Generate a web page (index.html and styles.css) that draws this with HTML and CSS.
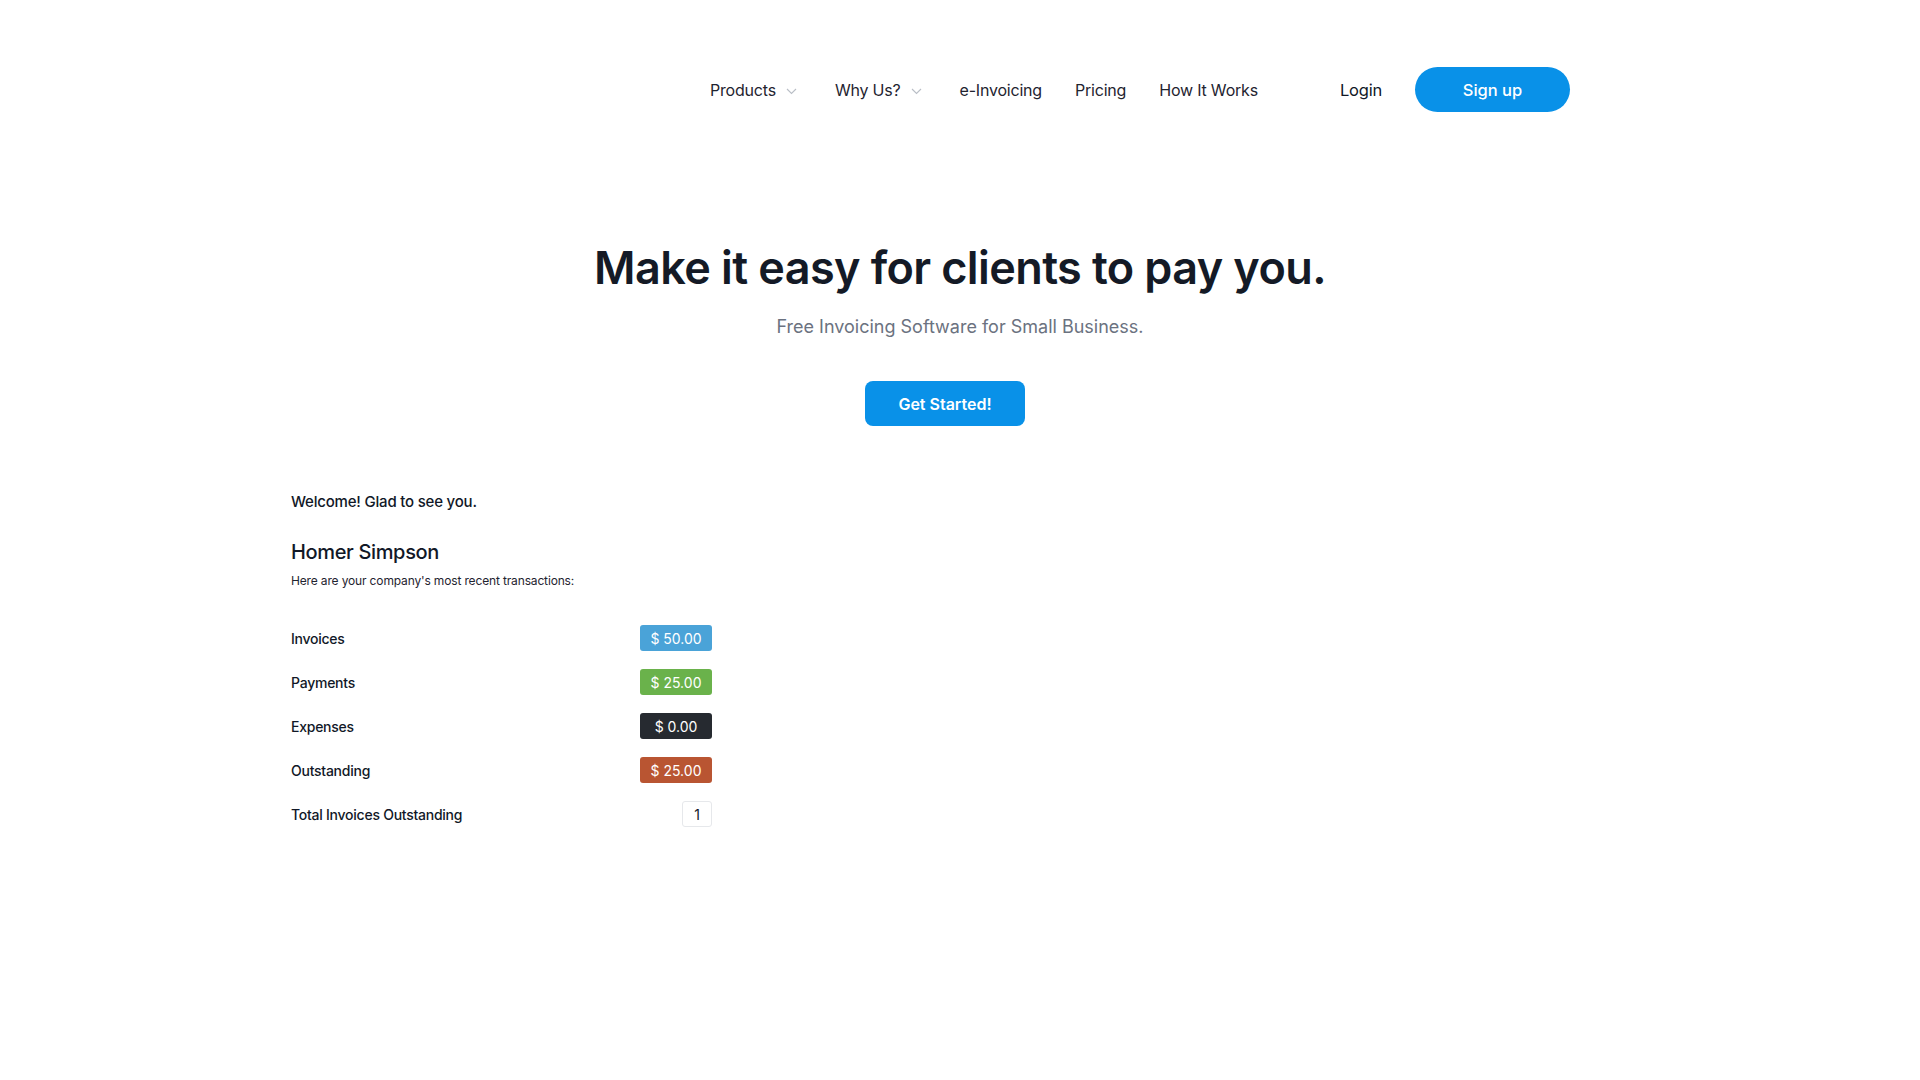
FILE: index.html
```html
<!DOCTYPE html>
<html lang="en">
<head>
  <meta charset="UTF-8">
  <title>Free Invoicing Software for Small Business</title>
  <meta name="viewport" content="width=device-width, initial-scale=1">
  <link rel="stylesheet" href="styles.css">
</head>
<body>
  <header class="site-header">
    <div class="brand"></div>
    <ul class="main-nav">
      <li class="has-menu">Products
        <svg class="caret" width="11" height="7" viewBox="0 0 11 7"><path d="M1 1l4.5 4.5L10 1" fill="none" stroke="#b9bec6" stroke-width="1.1"/></svg>
      </li>
      <li class="has-menu">Why Us?
        <svg class="caret" width="11" height="7" viewBox="0 0 11 7"><path d="M1 1l4.5 4.5L10 1" fill="none" stroke="#b9bec6" stroke-width="1.1"/></svg>
      </li>
      <li>e-Invoicing</li>
      <li>Pricing</li>
      <li>How It Works</li>
    </ul>
    <div class="nav-actions">
      <a class="login-link" href="#">Login</a>
      <a class="signup-btn" href="#">Sign up</a>
    </div>
  </header>

  <section class="hero">
    <h1>Make it easy for clients to pay you.</h1>
    <p class="lead">Free Invoicing Software for Small Business.</p>
    <a class="start-btn" href="#">Get Started!</a>
  </section>

  <section class="dashboard">
    <p class="welcome">Welcome! Glad to see you.</p>
    <h2>Homer Simpson</h2>
    <p class="note">Here are your company's most recent transactions:</p>
    <ul class="totals">
      <li><span>Invoices</span><span class="badge badge-blue">$ 50.00</span></li>
      <li><span>Payments</span><span class="badge badge-green">$ 25.00</span></li>
      <li><span>Expenses</span><span class="badge badge-dark">$ 0.00</span></li>
      <li><span>Outstanding</span><span class="badge badge-red">$ 25.00</span></li>
      <li><span>Total Invoices Outstanding</span><span class="badge badge-plain">1</span></li>
    </ul>
  </section>
</body>
</html>
```

FILE: styles.css
```css
body {
  margin: 0;
  font-family: Inter, "Noto Sans", Arial, sans-serif;
  color: #111827;
  background: #fff;
}
a {
  text-decoration: none;
}

/* Top navigation */
.site-header {
  display: flex;
  align-items: center;
  width: 1280px;
  margin: 0 0 0 290px;
  padding-top: 67px;
  height: 45px;
}
.brand {
  width: 420px;
}
.main-nav {
  display: flex;
  align-items: center;
  gap: 33px;
  list-style: none;
  margin: 0;
  padding: 0;
  font-size: 16px;
  color: #1f2430;
  letter-spacing: -0.2px;
}
.main-nav .has-menu {
  display: flex;
  align-items: center;
}
.caret {
  margin: 4px 5px 0 10px;
}
.nav-actions {
  margin-left: auto;
  display: flex;
  align-items: center;
}
.login-link {
  color: #111827;
  font-size: 16.5px;
  letter-spacing: -0.2px;
  margin-right: 33px;
}
.signup-btn {
  display: inline-flex;
  align-items: center;
  justify-content: center;
  width: 155px;
  height: 45px;
  border-radius: 23px;
  background: #0991e8;
  color: #fff;
  font-size: 16.5px;
  font-weight: 500;
}

/* Hero */
.hero {
  text-align: center;
  margin-top: 129px;
}
.hero h1 {
  margin: 0;
  font-size: 45px;
  line-height: 54px;
  font-weight: 600;
  letter-spacing: -0.6px;
  color: #141a26;
}
.lead {
  margin: 18px 0 0;
  font-size: 18px;
  line-height: 27px;
  color: #6b7280;
}
.start-btn {
  display: inline-flex;
  align-items: center;
  justify-content: center;
  width: 160px;
  height: 45px;
  margin: 41px 30px 0 0;
  border-radius: 8px;
  background: #0991e8;
  color: #fff;
  font-size: 16px;
  font-weight: 600;
}

/* Welcome panel */
.dashboard {
  width: 421px;
  margin: 65px 0 0 291px;
}
.welcome {
  margin: 0;
  font-size: 15px;
  line-height: 22px;
  font-weight: 500;
  letter-spacing: -0.2px;
}
.dashboard h2 {
  margin: 25px 0 0;
  font-size: 20px;
  line-height: 28px;
  font-weight: 500;
  letter-spacing: -0.35px;
}
.note {
  margin: 6px 0 0;
  font-size: 12px;
  line-height: 18px;
  color: #1f2430;
  letter-spacing: -0.15px;
}
.totals {
  list-style: none;
  margin: 26px 0 0;
  padding: 0;
}
.totals li {
  display: flex;
  align-items: center;
  justify-content: space-between;
  height: 44px;
  font-size: 14px;
  font-weight: 500;
  letter-spacing: -0.25px;
}
.badge {
  display: inline-flex;
  align-items: center;
  justify-content: center;
  width: 72px;
  height: 26px;
  border-radius: 3px;
  color: #fff;
  font-size: 14px;
  font-weight: 400;
  letter-spacing: 0;
  box-sizing: border-box;
}
.badge-blue { background: #4aa3d8; }
.badge-green { background: #6ab24b; }
.badge-dark { background: #262a30; }
.badge-red { background: #b95532; }
.badge-plain {
  width: 30px;
  background: #fff;
  color: #111827;
  border: 1px solid #e6e8eb;
}
```
